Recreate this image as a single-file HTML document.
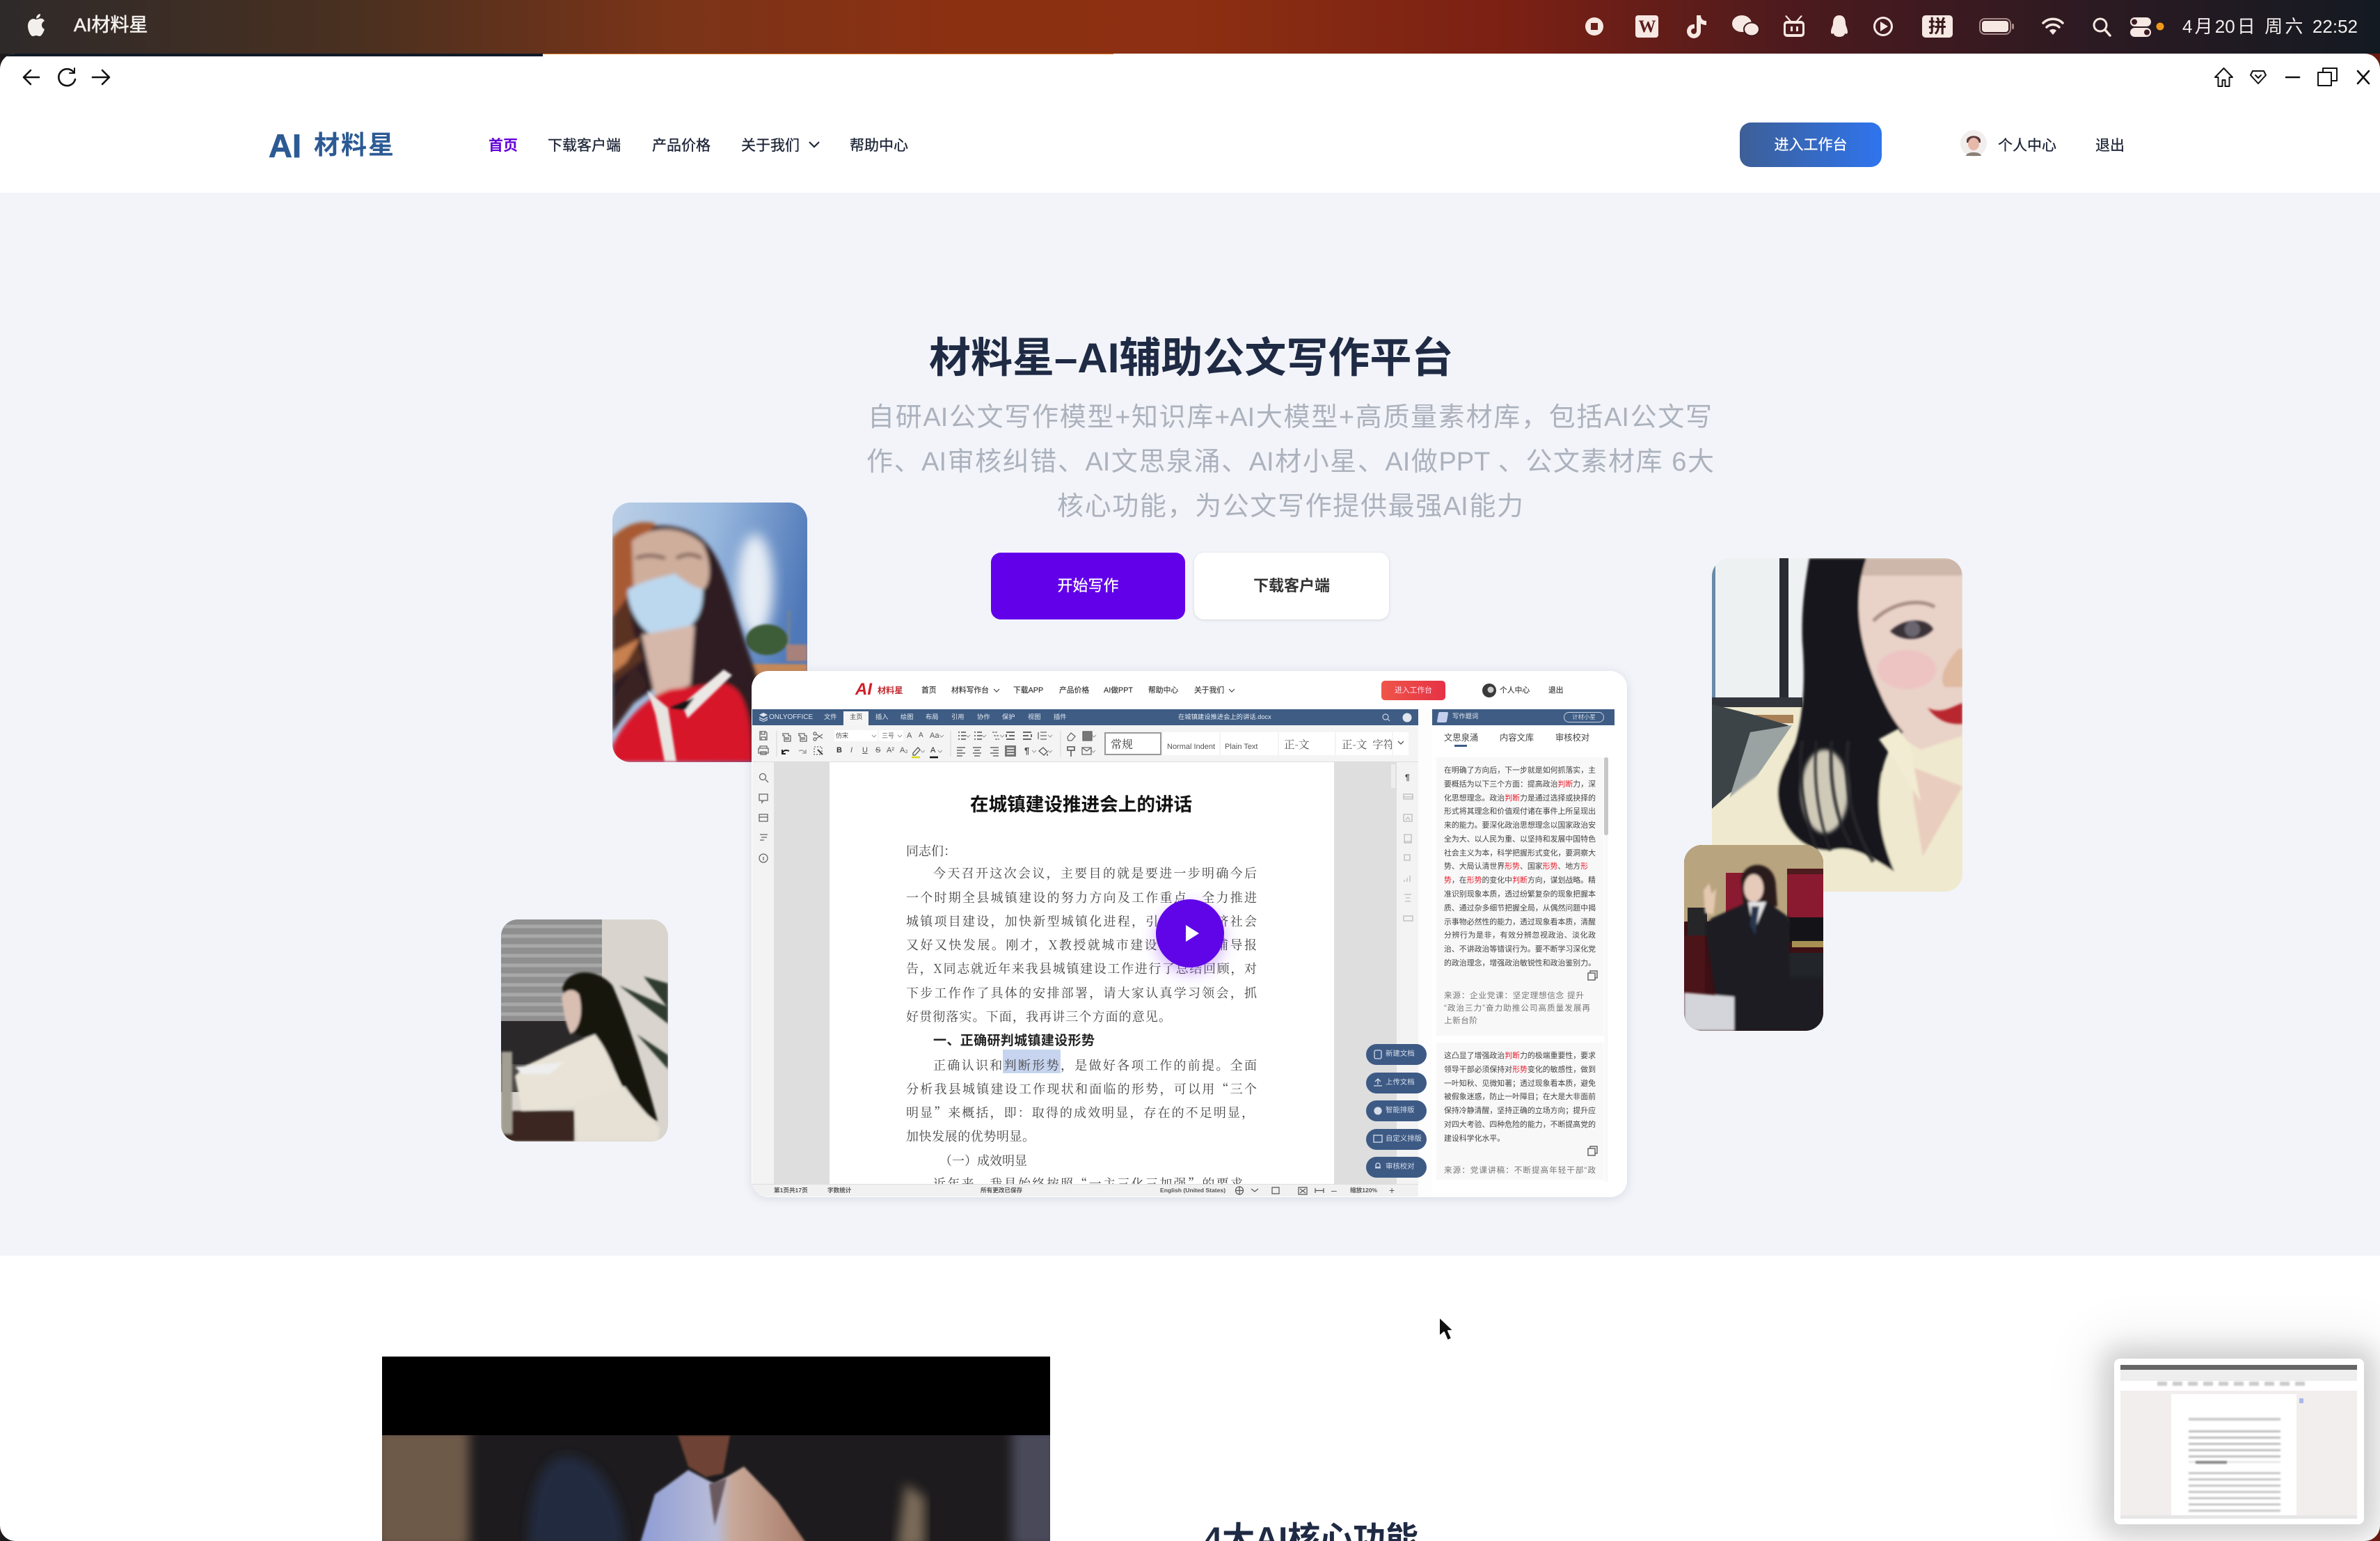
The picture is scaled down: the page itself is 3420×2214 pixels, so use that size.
<!DOCTYPE html>
<html lang="zh-CN"><head><meta charset="utf-8"><title>AI材料星</title>
<style>
*{box-sizing:border-box;margin:0;padding:0}
html,body{width:3420px;height:2214px;overflow:hidden}
body{position:relative;font-family:"Liberation Sans","Noto Sans CJK SC",sans-serif;background:linear-gradient(90deg,#1a1a1c 0,#3a1a14 40%,#6a1c12 100%)}
.a{position:absolute}
.t{position:absolute;white-space:nowrap;line-height:1}
.j{position:absolute;white-space:nowrap;text-align:justify;text-align-last:justify}
#bar{left:0;top:0;width:3420px;height:77px;background:linear-gradient(90deg,#2e2a2a 0,#4a3020 15%,#7a3418 28%,#8c3012 40%,#8c2f12 50%,#7a2014 64%,#4a1a1e 76%,#2c1a22 88%,#141a22 100%)}
#win{left:0;top:0;width:3420px;height:2214px;background:#fff;clip-path:inset(77px 0 0 0 round 22px)}
.nav{font-size:21px;color:#1f2638;-webkit-text-stroke:.35px #1f2638;top:199px}
.ph{position:absolute;display:block}
.doc{font-family:"Noto Serif CJK SC","Liberation Serif",serif;font-size:18px;color:#444;line-height:24px;height:24px}
.mini{font-size:10.8px;color:#333;-webkit-text-stroke:.15px #333}
.ot{font-size:9.3px;color:#e6ebf2;top:1026px}
.pn{font-size:10.9px;line-height:19.8px;height:19.8px;color:#444;width:218px;left:2075px}
.pn b{color:#e8202c;font-weight:400}
.src{font-size:11.6px;line-height:18px;height:18px;color:#777;left:2075px}
.fb{position:absolute;left:1963px;width:87px;height:30px;border-radius:15px;background:#3d5a85;color:#d5dde9;font-size:10.4px;line-height:30px;text-align:left;padding-left:28px;white-space:nowrap}
.sb{font-size:8.6px;color:#555;font-weight:700;top:1706px}
.box{position:absolute;top:1052px;height:33px;background:#fff}
.ti{font-size:11px;color:#555;top:1073px}
</style></head><body>

<!-- menu bar -->
<div class="a" id="bar"></div>
<svg class="a" style="left:0;top:0" width="3420" height="77" viewBox="0 0 3420 77">
<path transform="translate(40 20)" fill="#f3efec" d="M12 8C14 8 16 6.5 19 6.5C21 6.5 23 8 24 10C21 11.5 20 14 20 16C20 19 22 21 24 22C23 25 20 32 17 32C15 32 14 31 12 31C10 31 9 32 7 32C4 32 0 24 0 17C0 11 4 7 8 7C9.5 7 11 8 12 8ZM12 6.5C12 3 15 0 18 0C18.3 3.5 15.5 6.5 12 6.5Z"/>
<g fill="#f6e8e2">
<path fill-rule="evenodd" d="M2291 25a13 13 0 1 0 .01 0zM2286 33h10v10h-10z"/>
<rect x="2350" y="22" width="33" height="32" rx="4"/>
<path d="M2438 22h6c0 5 3 8 8 8v6c-3 0-6-1-8-2v11a10 10 0 1 1-9-10v6a4 4 0 1 0 3 4z"/>
<ellipse cx="2503" cy="34" rx="14" ry="12"/><ellipse cx="2517" cy="42" rx="11" ry="9.5" stroke="#3d1a1c" stroke-width="2"/>
<path fill-rule="evenodd" d="M2568 30h20a5 5 0 0 1 5 5v13a5 5 0 0 1-5 5h-20a5 5 0 0 1-5-5V35a5 5 0 0 1 5-5zm0 4a2 2 0 0 0-2 2v11a2 2 0 0 0 2 2h20a2 2 0 0 0 2-2V36a2 2 0 0 0-2-2z"/>
<rect x="2573" y="38" width="3" height="7"/><rect x="2581" y="38" width="3" height="7"/>
<path d="M2567 22l7 8h-3l-6-7zM2588 22l-7 8h3l6-7z"/>
<path d="M2643 22c7 0 9 6 9 12 0 3 3 7 3 12 0 3-2 3-4 2 0 3-4 5-8 5s-8-2-8-5c-2 1-4 1-4-2 0-5 3-9 3-12 0-6 2-12 9-12z"/>
<path fill-rule="evenodd" d="M2706 24a14 14 0 1 0 .01 0zm0 3a11 11 0 1 1-.01 0z"/><path d="M2702 31l11 7-11 7z"/>
<rect x="2762" y="22" width="44" height="32" rx="5"/>
<rect x="2845" y="27" width="44" height="22" rx="7" fill="none" stroke="#a88a88" stroke-width="2"/>
<rect x="2848" y="30" width="38" height="16" rx="4"/><rect x="2891" y="34" width="3" height="8" rx="1.5" fill="#a88a88"/>
<path d="M2950 50l-5-6a7 7 0 0 1 10 0z"/>
</g>
<g fill="none" stroke="#f6e8e2" stroke-linecap="round">
<path stroke-width="3.5" d="M2941 39a13 13 0 0 1 18 0M2936 33a20 20 0 0 1 28 0"/>
<circle cx="3018" cy="36" r="9" stroke-width="3"/><path stroke-width="3.5" d="M3025 43l7 8"/>
</g>
<text x="2367" y="46" font-size="25" font-weight="700" fill="#5a1c1e" text-anchor="middle" font-family="Liberation Serif,serif">W</text>
<text x="2784" y="47" font-size="26" font-weight="700" fill="#3a1a1c" text-anchor="middle" font-family="Noto Sans CJK SC,sans-serif">拼</text>
<g fill="#f6e8e2">
<rect x="3061" y="25" width="30" height="13" rx="6.5"/><rect x="3061" y="40" width="30" height="13" rx="6.5"/>
<circle cx="3067" cy="31.500" r="4" fill="#3a1a20"/><circle cx="3085" cy="46.500" r="4" fill="#3a1a20"/>
</g>
<circle cx="3104" cy="38" r="5.500" fill="#f09a1a"/>
</svg>
<div class="t" style="left:106px;top:23px;font-size:27px;color:#f5f1ee;-webkit-text-stroke:.6px #f5f1ee">AI材料星</div>
<div class="j" style="left:3136px;top:20px;width:252px;height:36px;font-size:26px;line-height:36px;color:#f4efee">4月20日 周六 22:52</div>

<!-- window -->
<div class="a" id="win">
<div class="a" style="left:0;top:75px;width:780px;height:6px;background:#101a28"></div>
<div class="a" style="left:780px;top:75px;width:820px;height:3px;background:#d47a28"></div>

<svg class="a" style="left:0;top:0" width="3420" height="140" viewBox="0 0 3420 140" fill="none" stroke="#111" stroke-width="2.6" stroke-linecap="round" stroke-linejoin="round">
<path d="M56 111H35M44 101L34 111L44 121"/>
<path d="M106 104a12 12 0 1 0 2 10"/><path d="M107 98v7h-7" stroke-width="2"/>
<path d="M133 111H156M147 101L157 111L147 121"/>
<path stroke-width="2" d="M3195.500 98L3183 111h4.500v13h6v-9h4v9h6v-13h4.500z"/>
<path stroke-width="2" d="M3237 102h16l3 6-11 12-11-12zM3241 108l4 4 4-4"/>
<path d="M3285 111h19"/>
<path stroke-width="2" d="M3331 104h19v19h-19zM3338 104v-6h20v18h-8"/>
<path d="M3388 102l16 18M3404 102l-16 18"/>
</svg>

<div class="t" style="left:386px;top:186px;font-size:47px;font-weight:700;color:#2c5a94;-webkit-text-stroke:.8px #2c5a94">AI</div>
<div class="t" style="left:451px;top:190px;font-size:37px;font-weight:700;color:#2c5a94;letter-spacing:2px">材料星</div>
<div class="t nav" style="left:702px;color:#6200d8;font-weight:700;-webkit-text-stroke:0">首页</div>
<div class="t nav" style="left:787px">下载客户端</div>
<div class="t nav" style="left:937px">产品价格</div>
<div class="t nav" style="left:1065px">关于我们</div>
<svg class="a" style="left:1160px;top:201px" width="20" height="14" fill="none" stroke="#1f2638" stroke-width="2.2"><path d="M3 3l7 7 7-7"/></svg>
<div class="t nav" style="left:1221px">帮助中心</div>
<div class="a" style="left:2500px;top:176px;width:204px;height:64px;border-radius:16px;background:linear-gradient(90deg,#3d5f96,#2f74ee);color:#fff;font-size:21px;text-align:center;line-height:66px;-webkit-text-stroke:.3px #fff">进入工作台</div>
<svg class="a" style="left:2816px;top:186px" width="40" height="40" viewBox="0 0 40 40"><circle cx="20" cy="20" r="19" fill="#f3eeee"/><path d="M10 16c0-9 20-9 20 0v3H10z" fill="#5a3a3c"/><ellipse cx="20" cy="21" rx="8" ry="9" fill="#e6b9a8"/><path d="M9 38c1-7 21-7 22 0z" fill="#8a8078"/></svg>
<div class="t nav" style="left:2871px">个人中心</div>
<div class="t nav" style="left:3011px">退出</div>

<!-- hero -->
<div class="a" style="left:0;top:277px;width:3420px;height:1527px;background:#f2f4f9"></div>
<div class="t" style="left:1335px;top:485px;font-size:60px;font-weight:700;color:#1f2a44">材料星–AI辅助公文写作平台</div>
<div class="j" style="left:1247px;top:568px;width:1213px;height:64px;font-size:38px;line-height:64px;color:#acb2bd">自研AI公文写作模型+知识库+AI大模型+高质量素材库，包括AI公文写</div>
<div class="j" style="left:1245px;top:632px;width:1218px;height:64px;font-size:38px;line-height:64px;color:#acb2bd">作、AI审核纠错、AI文思泉涌、AI材小星、AI做PPT 、公文素材库 6大</div>
<div class="j" style="left:1519px;top:696px;width:670px;height:64px;font-size:38px;line-height:64px;color:#acb2bd">核心功能，为公文写作提供最强AI能力</div>
<div class="a" style="left:1424px;top:794px;width:279px;height:96px;border-radius:14px;background:#6200ea;color:#fff;font-size:22px;text-align:center;line-height:96px;-webkit-text-stroke:.3px #fff">开始写作</div>
<div class="a" style="left:1716px;top:794px;width:280px;height:96px;border-radius:14px;background:#fff;box-shadow:0 1px 4px rgba(0,0,0,.12);color:#333;font-size:22px;font-weight:700;text-align:center;line-height:96px">下载客户端</div>

<!-- photo: mask girl -->
<svg class="ph" style="left:880px;top:722px;border-radius:26px" width="280" height="373" viewBox="0 0 280 373">
<defs><linearGradient id="sky" x1="0" y1="0" x2="1" y2=".3"><stop offset="0" stop-color="#bcd0e6"/><stop offset=".5" stop-color="#98b8de"/><stop offset="1" stop-color="#4f78b8"/></linearGradient><filter id="b3" x="-30%" y="-30%" width="160%" height="160%"><feGaussianBlur stdDeviation="9"/></filter><filter id="b2" x="-10%" y="-10%" width="120%" height="120%"><feGaussianBlur stdDeviation="3"/></filter><filter id="bs" x="-5%" y="-5%" width="110%" height="110%"><feGaussianBlur stdDeviation="1.500"/></filter></defs>
<rect width="280" height="373" fill="url(#sky)"/>
<ellipse cx="205" cy="120" rx="26" ry="75" fill="#e8eef6" filter="url(#b3)"/>
<g filter="url(#bs)">
<rect x="190" y="232" width="90" height="26" fill="#c88a5a"/>
<ellipse cx="222" cy="197" rx="30" ry="22" fill="#3c5c38"/>
<rect x="252" y="155" width="3" height="65" fill="#7a828a"/><rect x="250" y="204" width="30" height="24" fill="#a8827a"/>
</g>
<g filter="url(#b2)">
<path d="M0 66C25 28 92 24 126 50C158 76 168 128 183 175C196 222 214 258 218 300L232 373H110L70 260L0 310Z" fill="#2e1e20"/>
<path d="M0 50C20 30 40 25 62 30C42 60 30 90 30 125L0 165Z" fill="#a85a30"/>
<path d="M0 165L30 125C22 160 30 195 45 225L0 260Z" fill="#5a3024"/>
<path d="M0 215L40 195L20 230L0 245Z" fill="#c88050"/>
<path d="M0 285L32 235L50 262L0 330Z" fill="#3a2422"/>
<path d="M28 55C60 30 105 35 130 60C145 90 140 120 130 125L30 120Z" fill="#cfae9c"/>
<path d="M34 80C50 74 62 76 76 80M92 80C106 72 118 74 128 80" stroke="#5a4038" stroke-width="4" fill="none"/>
<path d="M22 125C50 110 70 108 90 102C105 115 120 122 130 125C130 150 125 170 105 182C90 195 70 202 55 190C35 175 22 150 22 125Z" fill="#bcd8ef"/>
<path d="M42 190L118 176L112 262L62 282Z" fill="#d6b8aa"/>
<path d="M0 350C20 305 58 275 85 268L140 262C185 250 200 290 200 373H0Z" fill="#d8182c"/>
<path d="M228 262L280 245V373H235Z" fill="#c81428"/>
</g>
<g filter="url(#bs)">
<path d="M50 270L80 295L92 372L75 372L62 305Z" fill="#e8e4e0"/>
<path d="M100 290L160 240L172 248L108 310Z" fill="#ebe8e6"/>
<path d="M82 295L118 280L105 298Z" fill="#141418"/>
</g>
</svg>
<!-- photo: desk girl -->
<svg class="ph" style="left:720px;top:1321px;border-radius:24px" width="240" height="319" viewBox="0 0 240 319">
<rect width="240" height="319" fill="#d9d5ce"/>
<rect width="145" height="146" fill="#8f8f8f"/>
<path d="M0 10H145M0 24H145M0 38H145M0 52H145M0 66H145M0 80H145M0 94H145M0 108H145M0 122H145M0 136H145" stroke="#a8a8a8" stroke-width="5"/>
<rect y="146" width="125" height="62" fill="#2a2829"/>
<rect x="0" y="208" width="80" height="40" fill="#4c4a48"/>
<g filter="url(#bs)">
<path d="M240 92L205 82L238 125L170 95L240 150ZM240 215L195 165L240 195Z" fill="#2f3a2e"/>
<path d="M88 100C95 68 140 70 160 95C180 140 205 215 225 290C205 280 180 255 165 220C145 190 120 165 98 160C100 140 95 115 88 100Z" fill="#15120f"/>
<path d="M87 112C92 100 105 98 112 108C118 130 115 155 100 165C92 150 90 130 87 112Z" fill="#d9bfb2"/>
<path d="M20 225L35 210C60 200 95 180 135 165C155 190 165 220 175 250L130 268L30 275Z" fill="#e8e3d6"/>
<path d="M105 262L178 240C195 265 215 285 228 300L225 319H110Z" fill="#e6e1d4"/>
<path d="M0 275H105V319H0Z" fill="#3a2620"/>
<rect x="0" y="190" width="16" height="118" fill="#a39e92"/>
<path d="M20 212L90 205L70 222H30Z" fill="#eee"/>
</g>
</svg>
<!-- photo: face -->
<svg class="ph" style="left:2460px;top:802px;border-radius:26px" width="360" height="479" viewBox="0 0 360 479">
<rect width="360" height="479" fill="#efe9cf"/>
<rect width="150" height="205" fill="#eef1f2"/><rect width="5" height="200" fill="#6a8aa8"/>
<rect x="97" width="13" height="205" fill="#2a2c34"/>
<rect y="200" width="130" height="14" fill="#33363c"/><rect x="62" y="225" width="55" height="12" fill="#a88058"/>
<path d="M0 210L60 225L110 240L80 290L0 360Z" fill="#3c4448"/><path d="M55 250L115 240L60 320L25 345Z" fill="#9aa3a2"/>
<g filter="url(#bs)">
<path d="M0 368C30 335 70 310 103 285L200 300L360 330V479H0Z" fill="#efe9cf"/>
<path d="M213 0H360V255L300 275L235 235L210 130Z" fill="#e9d2c8"/>
<path d="M213 0H360V25H213Z" fill="#cdb6aa"/>
<path d="M140 0H222C205 50 205 110 240 190C250 215 262 235 275 250C250 270 240 310 240 350C240 390 250 420 262 450C230 430 200 410 170 420C130 420 100 390 95 345C92 310 110 290 120 265C130 230 135 180 130 120C128 70 135 30 140 0Z" fill="#17171a"/>
</g>
<ellipse cx="162" cy="335" rx="34" ry="60" fill="#cfc9b8" filter="url(#b2)"/>
<g filter="url(#bs)" opacity=".85" fill="none" stroke="#26262a">
<path stroke-width="5" d="M130 262C122 310 132 370 150 418"/>
<path stroke-width="4" d="M150 262C146 310 150 365 170 420"/>
<path stroke-width="5" d="M172 262C168 320 178 375 200 412"/>
<path stroke-width="6" d="M196 262C190 320 198 380 232 436"/>
</g>
<g filter="url(#bs)">
<ellipse cx="280" cy="160" rx="42" ry="28" fill="#edc4c2"/>
<path d="M232 90C260 62 300 58 320 70" stroke="#a88e84" stroke-width="5" fill="none"/>
<path d="M256 105C275 85 310 85 318 102C305 118 275 122 256 105Z" fill="#3a3238"/>
<circle cx="288" cy="102" r="11" fill="#6a6670"/>
<path d="M355 130L360 130V185H335C325 175 335 150 355 130Z" fill="#dfb9a0"/>
<path d="M310 215C330 225 345 213 360 208V238C340 240 322 232 310 215Z" fill="#b8282e"/>
<path d="M287 300L360 328L303 428L290 350Z" fill="#e9cdbe"/>
<path d="M240 260L268 245L285 270L300 350L262 290Z" fill="#f2ecd2"/>
</g>
</svg>
<!-- photo: suit -->
<svg class="ph" style="left:2420px;top:1214px;border-radius:26px" width="200" height="267" viewBox="0 0 200 267">
<rect width="200" height="267" fill="#3c1014"/>
<rect width="200" height="110" fill="#b8a47e"/>
<rect x="60" y="40" width="30" height="70" fill="#8a1a30"/><rect x="148" y="34" width="52" height="72" fill="#8a1a30"/>
<rect x="148" y="34" width="52" height="8" fill="#4e1c1e"/><rect x="5" y="90" width="28" height="40" fill="#262628"/>
<rect x="150" y="104" width="50" height="36" fill="#141418"/><rect x="155" y="138" width="45" height="9" fill="#a89054"/>
<rect x="0" y="130" width="30" height="90" fill="#4a1418"/><rect x="150" y="155" width="50" height="50" fill="#22262a"/>
<g filter="url(#bs)">
<path d="M82 50C85 20 132 20 132 60L134 88L110 92L85 85Z" fill="#2a1d1a"/>
<ellipse cx="100" cy="62" rx="14" ry="20" fill="#e6cbbb"/>
<path d="M40 105L92 82H120L152 105L150 215L130 267H45L45 215L30 115Z" fill="#1d1d24"/>
<path d="M92 82L118 82L100 125Z" fill="#e4e4e6"/><path d="M97 88L108 88L102 130L95 115Z" fill="#26364e"/>
<path d="M28 65L36 55L40 70L46 62L44 85L42 100L30 98Z" fill="#e4c8b0"/>
<rect x="120" y="190" width="80" height="77" fill="#1a1c20"/>
<path d="M0 212L72 218V267H0Z" fill="#d4d5da"/>
</g>
</svg>

<!-- doc window -->
<div class="a" style="left:1080px;top:964px;width:1258px;height:756px;border-radius:24px;background:#fff;box-shadow:0 2px 14px rgba(60,70,90,.14)"></div>
<div class="a" style="left:0;top:0;width:3420px;height:2214px;clip-path:inset(964px 1082px 494px 1080px round 24px)">
 <!-- inner header -->
 <div class="t" style="left:1229px;top:979px;font-size:24px;font-weight:700;font-style:italic;color:#d11f2a;font-family:'Liberation Sans',sans-serif">AI</div>
 <div class="t" style="left:1261px;top:986px;font-size:12.200px;font-weight:700;color:#c02a30">材料星</div>
 <div class="t mini" style="left:1324px;top:987px">首页</div>
 <div class="t mini" style="left:1367px;top:987px">材料写作台</div>
 <div class="t mini" style="left:1456px;top:987px">下载APP</div>
 <div class="t mini" style="left:1522px;top:987px">产品价格</div>
 <div class="t mini" style="left:1586px;top:987px">AI做PPT</div>
 <div class="t mini" style="left:1650px;top:987px">帮助中心</div>
 <div class="t mini" style="left:1716px;top:987px">关于我们</div>
 <svg class="a" style="left:1426px;top:988px" width="350" height="10" fill="none" stroke="#444" stroke-width="1.200"><path d="M2 2l4 4 4-4M340 2l4 4 4-4"/></svg>
 <div class="a" style="left:1985px;top:978px;width:92px;height:28px;border-radius:5px;background:linear-gradient(90deg,#ee5548,#e63246);color:#fde;font-size:10.800px;line-height:28px;text-align:center">进入工作台</div>
 <svg class="a" style="left:2130px;top:982px" width="20" height="20"><circle cx="10" cy="10" r="10" fill="#3a3a3a"/><circle cx="12" cy="9" r="4.500" fill="#ccc"/></svg>
 <div class="t mini" style="left:2155px;top:987px">个人中心</div>
 <div class="t mini" style="left:2225px;top:987px">退出</div>

 <!-- ribbons -->
 <div class="a" style="left:1081px;top:1019px;width:957px;height:23px;background:#3e5c84"></div>
 <div class="a" style="left:2058px;top:1019px;width:262px;height:23px;background:#3e5c84"></div>
 <div class="a" style="left:1212px;top:1022px;width:36px;height:20px;background:#f5f5f5"></div>
 <svg class="a" style="left:1090px;top:1024px" width="14" height="13" fill="#dde5ee"><path d="M7 0l6 3-6 3-6-3z"/><path d="M1 6l6 3 6-3v1.500l-6 3-6-3z"/><path d="M1 9l6 3 6-3v1.500l-6 2.500-6-2.500z"/></svg>
 <div class="t" style="left:1105px;top:1026px;font-size:10px;color:#dde5ee">ONLYOFFICE</div>
 <div class="t ot" style="left:1184px">文件</div><div class="t ot" style="left:1221px;color:#444">主页</div>
 <div class="t ot" style="left:1258px">插入</div><div class="t ot" style="left:1294px">绘图</div><div class="t ot" style="left:1330px">布局</div>
 <div class="t ot" style="left:1367px">引用</div><div class="t ot" style="left:1404px">协作</div><div class="t ot" style="left:1440px">保护</div>
 <div class="t ot" style="left:1477px">视图</div><div class="t ot" style="left:1514px">插件</div>
 <div class="t ot" style="left:1693px">在城镇建设推进会上的讲话.docx</div>
 <svg class="a" style="left:1985px;top:1023px" width="46" height="16" fill="none" stroke="#c6d2e0" stroke-width="1.200"><circle cx="6" cy="7" r="4"/><path d="M9 10l3 3"/><circle cx="37" cy="8" r="6.500" fill="#dfe6ef" stroke="none"/></svg>
 <div class="t ot" style="left:2087px;top:1025px">写作题词</div>
 <div class="a" style="left:2247px;top:1023px;width:58px;height:15px;border:1px solid #c6d2e0;border-radius:8px;font-size:8.400px;line-height:13px;color:#d5dde9;text-align:center">计材小星</div>
 <div class="a" style="left:2066px;top:1023px;width:14px;height:15px;background:#c4cfee;transform:skewX(-10deg);border-radius:2px"></div>

 <!-- toolbar -->
 <div class="a" style="left:1081px;top:1042px;width:957px;height:53px;background:#f4f4f4;border-bottom:1px solid #ddd"></div>
 <div class="a" style="left:1081px;top:1095px;width:31px;height:606px;background:#f3f3f3"></div>
 <div class="a" style="left:1112px;top:1095px;width:80px;height:606px;background:#dedede"></div>
 <div class="a" style="left:1192px;top:1095px;width:725px;height:606px;background:#fff"></div>
 <div class="a" style="left:1917px;top:1095px;width:90px;height:606px;background:#dedede"></div>
 <div class="a" style="left:2007px;top:1095px;width:31px;height:606px;background:#f3f3f3"></div>
 <div class="a" style="left:2038px;top:1019px;width:20px;height:700px;background:#fdfdfe"></div>
 <div class="a" style="left:1199px;top:1049px;width:62px;height:16px;background:#fff;font-size:9px;line-height:16px;padding-left:2px;color:#444">仿宋</div>
 <div class="a" style="left:1263px;top:1049px;width:35px;height:16px;background:#fff;font-size:9px;line-height:16px;padding-left:4px;color:#666">三号</div>
 <div class="box" style="left:1587px;width:82px;border:2px solid #999;font-family:'Noto Serif CJK SC',serif;font-size:16px;line-height:29px;padding-left:7px;color:#333">常规</div>
 <div class="box" style="left:1671px;width:81px;font-size:11px;line-height:42px;padding-left:6px;color:#555">Normal Indent</div>
 <div class="box" style="left:1754px;width:82px;font-size:11px;line-height:42px;padding-left:6px;color:#555">Plain Text</div>
 <div class="box" style="left:1838px;width:80px;font-family:'Noto Serif CJK SC',serif;font-size:15.500px;line-height:35px;padding-left:7px;color:#555;overflow:hidden">正-文</div>
 <div class="box" style="left:1920px;width:80px;font-family:'Noto Serif CJK SC',serif;font-size:15.500px;line-height:35px;padding-left:8px;color:#555;overflow:hidden;white-space:nowrap">正-文&nbsp; 字符</div>
 <div class="box" style="left:2002px;width:22px"></div>

 <svg class="a" style="left:0;top:0" width="3420" height="1730" viewBox="0 0 3420 1730" fill="none" stroke="#666" stroke-width="1.300">
  <path d="M2009 1065l4 4 4-4" stroke="#555"/>
  <path d="M1116 1050v37M1366 1050v37M1524 1050v37" stroke="#ddd"/>
  <path d="M1092 1051h8l2 2v10h-10zM1094 1051v4h5v-4M1094 1063v-4h6v4"/>
  <path d="M1092 1075v-3h10v3M1090 1075h14v7h-14zM1093 1080h8v4h-8z"/>
  <path d="M1125 1054h8v3h3v8h-9v-8h-2zM1128 1060h6M1128 1062h6M1148 1054h8v3h3v8h-9v-8h-2zM1151 1060h6M1151 1062h6"/>
  <circle cx="1171" cy="1054" r="2"/><circle cx="1171" cy="1062" r="2"/><path d="M1173 1055l9 6M1173 1061l9-6"/>
  <path d="M1124 1083c1-5 5-6 10-4M1124 1077v6h5" stroke="#222" stroke-width="2"/>
  <path d="M1158 1082c-3-4-6-5-10-3M1158 1077v5h-5" stroke="#aaa" stroke-width="1.800"/>
  <rect x="1170" y="1073" width="11" height="11" stroke-dasharray="2 2"/><path d="M1175 1077l7 7" stroke-width="2.200" stroke="#444"/>
  <path d="M1253 1056l3 3 3-3M1290 1056l3 3 3-3M1350 1056l3 3 3-3M1388 1056l3 3 3-3M1411 1056l3 3 3-3M1437 1056l3 3 3-3M1506 1056l3 3 3-3M1569 1056l3 3 3-3M1323 1078l3 3 3-3M1348 1078l3 3 3-3M1483 1078l3 3 3-3M1506 1078l3 3 3-3M1568 1078l3 3 3-3" stroke="#999" stroke-width="1"/>
  <path d="M1377 1052h2M1377 1057h2M1377 1062h2M1381 1052h7M1381 1057h7M1381 1062h7" stroke-width="1.800"/>
  <path d="M1400 1052h2M1400 1057h2M1400 1062h2M1404 1052h7M1404 1057h7M1404 1062h7" stroke-width="1.800"/>
  <path d="M1426 1052h8M1428 1057h8M1430 1062h6" stroke-dasharray="3 1"/>
  <path d="M1446 1052h12M1446 1062h12M1450 1057h8" stroke-width="2"/><path d="M1446 1055v4" stroke-width="2"/>
  <path d="M1470 1052h12M1470 1062h12M1470 1057h8" stroke-width="2"/><path d="M1482 1055v4" stroke-width="2"/>
  <path d="M1495 1052h9M1495 1057h9M1495 1062h9M1492 1052v10"/>
  <path d="M1534 1059l5-6 6 5-5 6h-5z"/>
  <rect x="1556" y="1051" width="13" height="13" fill="#777" stroke="#666"/>
  <path d="M1375 1074h12M1375 1078h8M1375 1082h12M1375 1086h8" stroke-width="1.500"/>
  <path d="M1398 1074h12M1400 1078h8M1398 1082h12M1400 1086h8" stroke-width="1.500"/>
  <path d="M1423 1074h12M1427 1078h8M1423 1082h12M1427 1086h8" stroke-width="1.500"/>
  <path d="M1312 1082l7-8 3 3-7 8h-3z" stroke="#555"/><path d="M1310 1088h12" stroke="#d8d820" stroke-width="2.500"/>
  <path d="M1336 1088h12" stroke="#111" stroke-width="2.500"/>
  <path d="M1493 1079l6-5 6 6-5 5zM1505 1083v3" stroke="#555"/>
  <path d="M1534 1073h10v5h-10zM1539 1078v9" stroke-width="1.800"/>
  <path d="M1555 1074h13v10h-13zM1555 1074l6.500 5 6.500-5"/>
  <circle cx="1096" cy="1116" r="4.500"/><path d="M1100 1120l4 4"/>
  <path d="M1091 1141h12v9h-6l-2 3v-3h-4z"/><path d="M1091 1170h12v10h-12zM1091 1174h12"/><path d="M1092 1199h11M1094 1203h8M1092 1207h6"/>
  <circle cx="1097" cy="1233" r="6"/><path d="M1097 1231v5"/>
  <path d="M2017 1141h13v7h-13zM2017 1145h13" stroke="#bbb"/><path d="M2017 1170h12v10h-12zM2020 1178l3-4 3 4" stroke="#bbb"/><path d="M2018 1199h10v12h-10zM2018 1209h10" stroke="#bbb"/><path d="M2018 1228h8v8h-8z" stroke="#bbb"/><path d="M2018 1267v-3M2022 1267v-6M2026 1267v-9" stroke="#bbb"/><path d="M2018 1285h10M2020 1290h6M2019 1295h8" stroke="#bbb"/><rect x="2017" y="1316" width="13" height="7" stroke="#bbb"/>
 </svg>
 <div class="t ti" style="left:1202px;font-weight:700;color:#333">B</div>
 <div class="t ti" style="left:1222px;font-style:italic">I</div>
 <div class="t ti" style="left:1239px;text-decoration:underline">U</div>
 <div class="t ti" style="left:1258px;text-decoration:line-through">S</div>
 <div class="t ti" style="left:1274px">A²</div>
 <div class="t ti" style="left:1293px">A₂</div>
 <div class="t ti" style="left:1337px;color:#222">A</div>
 <div class="t" style="left:1303px;top:1052px;font-size:11px;color:#555">A</div>
 <div class="t" style="left:1320px;top:1052px;font-size:10px;color:#555">A</div>
 <div class="t" style="left:1336px;top:1052px;font-size:11px;color:#555">Aa</div>
 <div class="a" style="left:1444px;top:1071px;width:16px;height:16px;background:#777"></div>
 <div class="a" style="left:1447px;top:1074px;width:10px;height:10px;background:repeating-linear-gradient(180deg,#e4e4e4 0 2px,#777 2px 4px)"></div>
 <div class="t" style="left:1472px;top:1072px;font-size:13px;font-weight:700;color:#444">¶</div>
 <div class="t" style="left:2019px;top:1111px;font-size:12px;font-weight:700;color:#444">¶</div>
 <div class="a" style="left:1999px;top:1098px;width:6px;height:34px;background:#eee"></div>

 <!-- doc text -->
 <div class="t" style="left:1394px;top:1143px;font-size:26.600px;font-weight:700;color:#111">在城镇建设推进会上的讲话</div>
 <div class="a" style="left:1441px;top:1508px;width:83px;height:34px;background:#c7d4ef"></div>
 <div class="j doc" style="left:1302px;top:1210px;width:68px">同志们：</div>
 <div class="j doc" style="left:1341px;top:1242px;width:465px">今天召开这次会议，主要目的就是要进一步明确今后</div>
 <div class="j doc" style="left:1302px;top:1277px;width:504px">一个时期全县城镇建设的努力方向及工作重点，全力推进</div>
 <div class="j doc" style="left:1302px;top:1311px;width:504px">城镇项目建设，加快新型城镇化进程，引领全县经济社会</div>
 <div class="j doc" style="left:1302px;top:1345px;width:504px">又好又快发展。刚才，X教授就城市建设作了专题辅导报</div>
 <div class="j doc" style="left:1302px;top:1379px;width:504px">告，X同志就近年来我县城镇建设工作进行了总结回顾，对</div>
 <div class="j doc" style="left:1302px;top:1414px;width:504px">下步工作作了具体的安排部署，请大家认真学习领会，抓</div>
 <div class="j doc" style="left:1302px;top:1448px;width:381px">好贯彻落实。下面，我再讲三个方面的意见。</div>
 <div class="j doc" style="left:1341px;top:1484px;width:232px;font-family:'Liberation Sans','Noto Sans CJK SC',sans-serif;font-weight:700;color:#222;font-size:19px">一、正确研判城镇建设形势</div>
 <div class="j doc" style="left:1341px;top:1518px;width:465px">正确认识和判断形势，是做好各项工作的前提。全面</div>
 <div class="j doc" style="left:1302px;top:1552px;width:504px">分析我县城镇建设工作现状和面临的形势，可以用“三个</div>
 <div class="j doc" style="left:1302px;top:1586px;width:500px">明显”来概括，即：取得的成效明显，存在的不足明显，</div>
 <div class="j doc" style="left:1302px;top:1620px;width:185px">加快发展的优势明显。</div>
 <div class="j doc" style="left:1350px;top:1655px;width:125px">（一）成效明显</div>
 <div class="j doc" style="left:1341px;top:1688px;width:445px">近年来，我县始终按照“一主三化三加强”的要求</div>

 <!-- status bar -->
 <div class="a" style="left:1081px;top:1701px;width:957px;height:18px;background:#f1f1f1;border-top:1px solid #ddd"></div>
 <div class="t sb" style="left:1112px">第1页共17页</div>
 <div class="t sb" style="left:1189px">字数统计</div>
 <div class="t sb" style="left:1409px">所有更改已保存</div>
 <div class="t sb" style="left:1667px">English (United States)</div>
 <div class="t sb" style="left:1940px">缩放120%</div>
 <div class="t" style="left:1996px;top:1703px;font-size:14px;color:#555">+</div>
 <div class="t" style="left:1913px;top:1703px;font-size:14px;color:#555">–</div>
 <svg class="a" style="left:1770px;top:1703px" width="135" height="15" fill="none" stroke="#555" stroke-width="1.200"><circle cx="11" cy="7.500" r="5.500"/><path d="M6 7.500h10M11 2v11"/><path d="M28 5l5 4 5-4"/><path d="M58 3h10v9h-10z"/><path d="M96 3h12v10h-12zM98 5l8 6M106 5l-8 6"/><path d="M120 7.500h12M120 4v7M132 4v7"/></svg>

 <!-- right panel -->
 <div class="t" style="left:2075px;top:1054px;font-size:12.300px;color:#444">文思泉涌</div>
 <div class="t" style="left:2155px;top:1054px;font-size:12.300px;color:#444">内容文库</div>
 <div class="t" style="left:2235px;top:1054px;font-size:12.300px;color:#444">审核校对</div>
 <div class="a" style="left:2090px;top:1070px;width:18px;height:2.500px;background:#3e5c84"></div>
 <div class="a" style="left:2064px;top:1088px;width:240px;height:400px;background:#f8f8f9"></div>
 <div class="a" style="left:2064px;top:1498px;width:240px;height:197px;background:#f8f8f9"></div>
 <div class="a" style="left:2305px;top:1088px;width:6px;height:112px;background:#ccc;border-radius:3px"></div>
 <div class="a" style="left:2305px;top:1088px;width:6px;height:610px;background:rgba(0,0,0,.025)"></div>
 <div class="j pn" style="top:1098px">在明确了方向后，下一步就是如何抓落实，主</div>
 <div class="j pn" style="top:1118px">要概括为以下三个方面：提高政治<b>判断</b>力，深</div>
 <div class="j pn" style="top:1138px">化思想理念。政治<b>判断</b>力是通过选择或抉择的</div>
 <div class="j pn" style="top:1157px">形式将其理念和价值观付诸在事件上所呈现出</div>
 <div class="j pn" style="top:1177px">来的能力。要深化政治思想理念以国家政治安</div>
 <div class="j pn" style="top:1197px">全为大、以人民为重、以坚持和发展中国特色</div>
 <div class="j pn" style="top:1217px">社会主义为本，科学把握形式变化，要洞察大</div>
 <div class="j pn" style="top:1236px;width:207px">势、大局认清世界<b>形势</b>、国家<b>形势</b>、地方<b>形</b></div>
 <div class="j pn" style="top:1256px"><b>势</b>，在<b>形势</b>的变化中<b>判断</b>方向，谋划战略。精</div>
 <div class="j pn" style="top:1276px">准识别现象本质，透过纷繁复杂的现象把握本</div>
 <div class="j pn" style="top:1296px">质、通过杂多细节把握全局，从偶然问题中揭</div>
 <div class="j pn" style="top:1316px">示事物必然性的能力，透过现象看本质，清醒</div>
 <div class="j pn" style="top:1335px">分辨行为是非，有效分辨忽视政治、淡化政</div>
 <div class="j pn" style="top:1355px">治、不讲政治等错误行为。要不断学习深化党</div>
 <div class="j pn" style="top:1375px">的政治理念，增强政治敏锐性和政治鉴别力。</div>
 <div class="j src" style="top:1422px;width:201px">来源：企业党课：坚定理想信念 提升</div>
 <div class="j src" style="top:1440px;width:210px">“政治三力”奋力助推公司高质量发展再</div>
 <div class="j src" style="top:1458px;width:48px">上新台阶</div>
 <div class="j pn" style="top:1508px">这凸显了增强政治<b>判断</b>力的极端重要性，要求</div>
 <div class="j pn" style="top:1528px">领导干部必须保持对<b>形势</b>变化的敏感性，做到</div>
 <div class="j pn" style="top:1548px">一叶知秋、见微知著；透过现象看本质，避免</div>
 <div class="j pn" style="top:1567px">被假象迷惑，防止一叶障目；在大是大非面前</div>
 <div class="j pn" style="top:1587px">保持冷静清醒，坚持正确的立场方向；提升应</div>
 <div class="j pn" style="top:1607px">对四大考验、四种危险的能力，不断提高党的</div>
 <div class="j pn" style="top:1627px;width:82px">建设科学化水平。</div>
 <div class="j src" style="top:1673px;width:218px">来源：党课讲稿：不断提高年轻干部“政</div>
 <svg class="a" style="left:2280px;top:1394px" width="18" height="270" fill="none" stroke="#666" stroke-width="1.500"><path d="M2 4h10v10H2zM5 4V1h10v10h-3"/><path d="M2 256h10v10H2zM5 256v-3h10v10h-3"/></svg>

 <!-- floating buttons -->
 <div class="fb" style="top:1500px">新建文档</div>
 <div class="fb" style="top:1541px">上传文档</div>
 <div class="fb" style="top:1581px">智能排版</div>
 <div class="fb" style="top:1622px">自定义排版</div>
 <div class="fb" style="top:1662px">审核校对</div>
 <svg class="a" style="left:1973px;top:1508px" width="14" height="180" fill="none" stroke="#d5dde9" stroke-width="1.300"><rect x="2" y="1" width="10" height="12" rx="2"/><path d="M7 42v8M3 46l4-4 4 4M1 52h12"/><circle cx="7" cy="88" r="5" fill="#d5dde9"/><rect x="1" y="123" width="12" height="10"/><path d="M3 170h8M4 166a3 3 0 1 1 6 0v3H4z"/></svg>
</div>

<!-- play -->
<div class="a" style="left:1661px;top:1292px;width:98px;height:98px;border-radius:50%;background:#6005e8;box-shadow:0 8px 22px rgba(140,60,240,.4)"></div>
<svg class="a" style="left:1700px;top:1325px" width="28" height="32"><path d="M4 4L23 16L4 28Z" fill="#fff"/></svg>

<!-- below hero -->
<div class="a" style="left:549px;top:1949px;width:960px;height:113px;background:#000"></div>
<svg class="a" style="left:549px;top:2062px" width="960" height="152" viewBox="0 0 960 152">
<defs><filter id="b6" x="-20%" y="-20%" width="140%" height="140%"><feGaussianBlur stdDeviation="8"/></filter><linearGradient id="sh" x1="0" x2="1"><stop offset="0" stop-color="#8e9cd4"/><stop offset=".45" stop-color="#b8bcd8"/><stop offset=".55" stop-color="#c8a898"/><stop offset="1" stop-color="#a87a68"/></linearGradient></defs>
<rect width="960" height="152" fill="#1d1b1d"/>
<rect x="-10" y="-10" width="135" height="172" fill="#6e5a4a" filter="url(#b6)"/>
<path d="M210 162C210 80 230 30 265 30C300 30 345 70 350 162Z" fill="#22293f" filter="url(#b6)"/>
<rect x="905" y="-10" width="65" height="172" fill="#4a4a5a" filter="url(#b6)"/>
<path d="M740 162L752 70L780 90V162Z" fill="#7a6a58" filter="url(#b6)"/>
<path d="M425 0H500L490 55L465 60L440 45Z" fill="#6e4234" filter="url(#bs)"/>
<path d="M369 162L392 85L440 50L478 70L520 45L568 95L614 162Z" fill="url(#sh)" filter="url(#bs)"/>
<path d="M470 70L495 62L478 130Z" fill="#6a5a60" filter="url(#bs)"/>
</svg>
<div class="t" style="left:1730px;top:2187px;font-size:47px;font-weight:700;color:#1f2a44">4大AI核心功能</div>

<!-- cursor -->
<svg class="a" style="left:2066px;top:1890px" width="24" height="40" viewBox="0 0 24 40"><path d="M2 2V30L9 24L14 36L20 33L15 22H23Z" fill="#111" stroke="#fff" stroke-width="2" stroke-linejoin="round"/></svg>

<!-- PiP thumb -->
<div class="a" style="left:3038px;top:1952px;width:359px;height:238px;background:#fff;border-radius:8px;box-shadow:0 0 34px 16px rgba(0,0,0,.14),0 0 80px 30px rgba(0,0,0,.07)"></div>
<div class="a" style="left:3047px;top:1961px;width:340px;height:7px;background:#666"></div>
<div class="a" style="left:3047px;top:1968px;width:340px;height:30px;background:linear-gradient(180deg,#eee 0 16px,#fff 16px)"></div>
<div class="a" style="left:3100px;top:1985px;width:220px;height:6px;background:repeating-linear-gradient(90deg,#ccc 0 14px,#fff 14px 22px);filter:blur(1px)"></div>
<div class="a" style="left:3047px;top:1998px;width:340px;height:181px;background:#f3eeee"></div>
<div class="a" style="left:3120px;top:2003px;width:180px;height:174px;background:#fff"></div>
<div class="a" style="left:3145px;top:2037px;width:132px;height:4px;background:#ccc;filter:blur(1px)"></div>
<div class="a" style="left:3145px;top:2055px;width:132px;height:46px;background:repeating-linear-gradient(180deg,#bdbdbd 0 3px,#fff 3px 9px);filter:blur(1px)"></div>
<div class="a" style="left:3155px;top:2099px;width:45px;height:4px;background:#888;filter:blur(1px)"></div>
<div class="a" style="left:3145px;top:2115px;width:132px;height:60px;background:repeating-linear-gradient(180deg,#c4c4c4 0 3px,#fff 3px 9px);filter:blur(1px)"></div>
<div class="a" style="left:3304px;top:2009px;width:6px;height:7px;background:#a8b8e8"></div>
<div class="a" style="left:3047px;top:2177px;width:340px;height:5px;background:#e6e6e6"></div>
</div>
</body></html>
